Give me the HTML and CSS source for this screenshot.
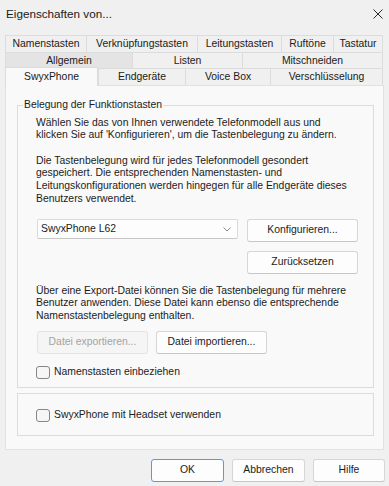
FILE: index.html
```html
<!DOCTYPE html>
<html lang="de">
<head>
  <meta charset="UTF-8">
  <title>Eigenschaften von...</title>
  <link rel="stylesheet" href="styles.css">
</head>
<body>
  <div class="window">
    <div class="titlebar">
      <span class="title">Eigenschaften von...</span>
      <svg class="close" width="10" height="10" viewBox="0 0 10 10">
        <path d="M0.5 0.5 L9.5 9.5 M9.5 0.5 L0.5 9.5" stroke="#2b2b2b" stroke-width="1" fill="none"/>
      </svg>
    </div>

    <!-- Tab rows -->
    <div class="tabs">
      <div class="tab-row row-1">
        <div class="tab">Namenstasten</div>
        <div class="tab">Verknüpfungstasten</div>
        <div class="tab">Leitungstasten</div>
        <div class="tab">Ruftöne</div>
        <div class="tab">Tastatur</div>
      </div>
      <div class="tab-row row-2">
        <div class="tab tab-hover">Allgemein</div>
        <div class="tab">Listen</div>
        <div class="tab">Mitschneiden</div>
      </div>
      <div class="tab-row row-3">
        <div class="tab tab-active">SwyxPhone</div>
        <div class="tab">Endgeräte</div>
        <div class="tab">Voice Box</div>
        <div class="tab">Verschlüsselung</div>
      </div>
    </div>

    <div class="panel">
      <fieldset class="group">
        <legend>Belegung der Funktionstasten</legend>
        <p class="first">Wählen Sie das von Ihnen verwendete Telefonmodell aus und<br>klicken Sie auf 'Konfigurieren', um die Tastenbelegung zu ändern.</p>
        <p>Die Tastenbelegung wird für jedes Telefonmodell gesondert gespeichert. Die entsprechenden Namenstasten- und Leitungskonfigurationen werden hingegen für alle Endgeräte dieses Benutzers verwendet.</p>

        <div class="model-row">
          <div class="combo">
            <span>SwyxPhone L62</span>
            <svg width="8" height="5" viewBox="0 0 8 5">
              <path d="M0.5 0.5 L4 4 L7.5 0.5" stroke="#8a8a8a" stroke-width="1" fill="none"/>
            </svg>
          </div>
          <div class="model-buttons">
            <div class="btn">Konfigurieren...</div>
            <div class="btn">Zurücksetzen</div>
          </div>
        </div>

        <p class="export-text">Über eine Export-Datei können Sie die Tastenbelegung für mehrere Benutzer anwenden. Diese Datei kann ebenso die entsprechende Namenstastenbelegung enthalten.</p>

        <div class="file-row">
          <div class="btn btn-disabled">Datei exportieren...</div>
          <div class="btn">Datei importieren...</div>
        </div>

        <div class="check-row include-row">
          <span class="check"></span>
          <span>Namenstasten einbeziehen</span>
        </div>
      </fieldset>

      <div class="group group-plain">
        <div class="check-row">
          <span class="check"></span>
          <span>SwyxPhone mit Headset verwenden</span>
        </div>
      </div>
    </div>

    <div class="actions">
      <div class="btn btn-default">OK</div>
      <div class="btn">Abbrechen</div>
      <div class="btn btn-narrow">Hilfe</div>
    </div>
  </div>
</body>
</html>
```

FILE: styles.css
```css
* {
  box-sizing: border-box;
}
body {
  margin: 0;
  background-color: #f0f0f0;
  color: #1c1c1c;
  font-family: 'Liberation Sans', Arial, sans-serif;
  font-size: 10.4px;
  line-height: 12.7px;
}
.window {
  width: 389px;
  height: 486px;
  overflow: hidden;
}
.titlebar {
  height: 35px;
  display: flex;
  justify-content: space-between;
  align-items: flex-start;
  padding: 7px 6px 0 6px;
}
.title {
  font-size: 11.7px;
  line-height: 14px;
  color: #1a1a1a;
}
.close {
  margin-top: 2px;
}

/* tabs */
.tabs {
  margin: 0 6px 0 5px;
}
.tab-row {
  display: grid;
}
.row-1 {
  grid-template-columns: 81px 111px 84px 52px 50px;
}
.row-2 {
  grid-template-columns: 127px 110px 141px;
}
.row-3 {
  grid-template-columns: 93px 87px 85px 113px;
  align-items: end;
  margin-top: -1px;
}
.tab {
  border-top: 1px solid #dcdcdc;
  border-left: 1px solid #dcdcdc;
  background-color: #f0f0f0;
  text-align: center;
  white-space: nowrap;
  color: #202020;
}
.tab:last-child {
  border-right: 1px solid #dcdcdc;
}
.row-1 .tab {
  height: 17px;
  line-height: 16px;
}
.row-2 .tab {
  height: 16px;
  line-height: 15px;
}
.row-3 .tab {
  height: 17px;
  line-height: 16px;
}
.tab-hover {
  background-color: #e4e4e4;
}
.row-3 .tab-active {
  position: relative;
  height: 19px;
  margin-bottom: -1px;
  line-height: 17px;
  background-color: #f9f9f9;
  border-right: 1px solid #dcdcdc;
}

/* panel */
.panel {
  margin: 0 5px;
  background-color: #f9f9f9;
  border: 1px solid #e2e2e2;
  padding: 13px 9px 13px 11px;
}
.group {
  margin: 0;
  border: 1px solid #dcdcdc;
  padding: 0 15px 8px 18px;
}
.group legend {
  margin-left: -13px;
  padding: 0 1px;
}
p {
  margin: 0 0 12.6px;
}
p.first {
  margin-top: 5px;
}
.model-row {
  display: flex;
  gap: 9px;
  align-items: flex-start;
  margin-top: 13.5px;
  margin-left: 1px;
}
.combo {
  width: 201px;
  height: 20px;
  display: flex;
  align-items: center;
  justify-content: space-between;
  padding: 0 6px 0 3px;
  background-color: #fdfdfd;
  border: 1px solid #dadada;
  border-bottom-color: #c8c8c8;
  border-radius: 2px;
}
.model-buttons {
  display: flex;
  flex-direction: column;
  gap: 9px;
}
.btn {
  width: 111px;
  height: 23px;
  display: flex;
  align-items: center;
  justify-content: center;
  background-color: #fdfdfd;
  border: 1px solid #d6d6d6;
  border-bottom-color: #c6c6c6;
  border-radius: 3px;
  color: #1c1c1c;
}
.export-text {
  margin: 10.6px 0 8.3px;
}
.file-row {
  display: flex;
  gap: 8px;
  margin-left: 1px;
}
.btn-disabled {
  background-color: #f5f5f5;
  border-color: #e3e3e3;
  color: #a3a3a3;
}
.check-row {
  display: flex;
  align-items: center;
  gap: 4px;
  height: 13px;
}
.include-row {
  margin-top: 12px;
}
.check {
  width: 14px;
  height: 13px;
  border: 1px solid #868686;
  border-radius: 3px;
  background-color: #f6f6f6;
}
.group-plain {
  margin-top: 5px;
  padding: 15px 15px 13px 18px;
}

/* dialog buttons */
.actions {
  display: flex;
  justify-content: flex-end;
  gap: 8px;
  margin-top: 9px;
  padding-right: 4px;
}
.actions .btn {
  width: 73px;
}
.actions .btn-narrow {
  width: 72px;
}
.btn-default {
  border: 1px solid #5a9ad8;
}
```
